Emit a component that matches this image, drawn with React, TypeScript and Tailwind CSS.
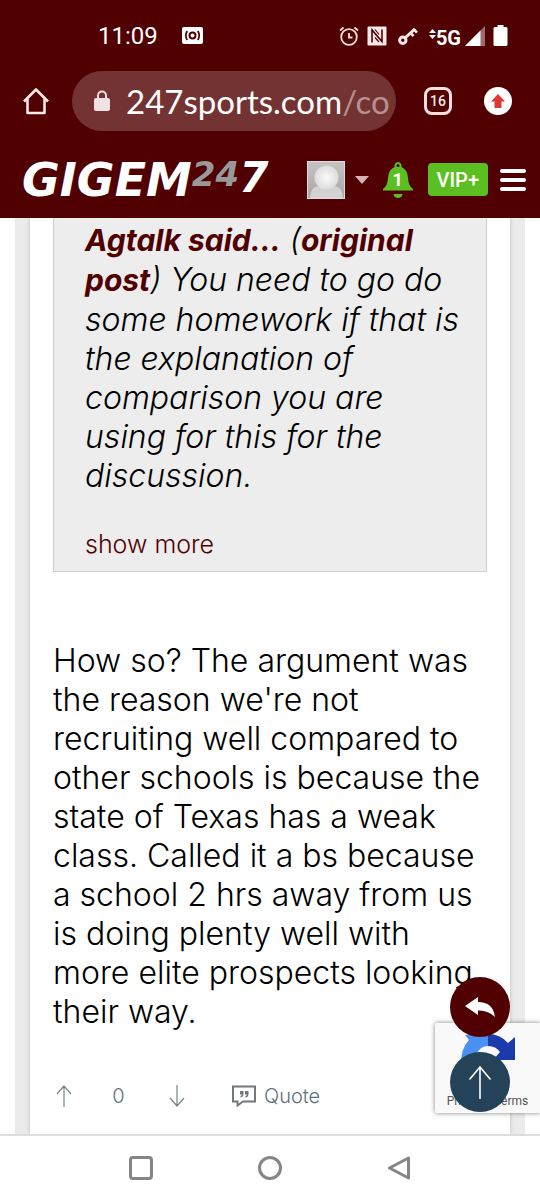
import type { ReactNode } from "react";

function StatusBar() {
  return (
    <div className="flex h-[71px] items-center justify-between pr-8 pl-[98px] text-white">
      <div className="flex items-center gap-6">
        <span className="text-[24px] leading-8">11:09</span>
        <svg className="h-[17px] w-[21px]" viewBox="0 0 21 17">
          <rect width="21" height="17" rx="2" fill="#fff" />
          <circle cx="10.500" cy="8.500" r="3" fill="none" stroke="#500000" strokeWidth="2" />
          <path d="M5.200 4Q2.400 8.500 5.200 13M15.800 4Q18.600 8.500 15.800 13" fill="none" stroke="#500000" strokeWidth="1.800" />
        </svg>
      </div>
      <div className="flex items-center">
        <svg className="mr-2 h-5 w-5" viewBox="0 0 20 20" fill="none" stroke="#f8dede" strokeWidth="1.800">
          <circle cx="10" cy="11" r="7.800" />
          <path d="M10 7v4.500h3.500M1 4.500L4.500 1.500M19 4.500L15.500 1.500" />
        </svg>
        <svg className="mr-[11px] h-5 w-5" viewBox="0 0 20 20">
          <rect x="0.500" y="0.500" width="19" height="19" rx="1" fill="#f8e8e8" />
          <path d="M5 16.500V4L15 15.500V3.500" fill="none" stroke="#500000" strokeWidth="1.600" />
          <path d="M8 3.500L12 8.500M8 11.500L12 16" fill="none" stroke="#500000" strokeWidth="1.200" />
        </svg>
        <svg className="mr-[11px] h-5 w-5" viewBox="0 0 20 20" fill="none" stroke="#f8e8e8">
          <circle cx="4.800" cy="14.200" r="3.200" strokeWidth="3" />
          <path d="M7.500 11.500L17 2.800" strokeWidth="3" />
          <path d="M12.500 7l3 3.200M16 3.500l3 3.200" strokeWidth="2.600" />
        </svg>
        <svg className="mb-1 h-[10px] w-[7px]" viewBox="0 0 7 10" fill="#fff">
          <path d="M0 4L3.500 0L7 4zM0 6L3.500 10L7 6z" />
        </svg>
        <span className="mt-1 text-[20px] leading-6 font-bold">5G</span>
        <svg className="ml-1 h-5 w-5" viewBox="0 0 20 20">
          <path d="M0 20L20 0V20z" fill="#9d6b6b" />
          <path d="M0 20L15.500 4.500V20z" fill="#fff" />
        </svg>
        <svg className="ml-2 h-[21px] w-[15px]" viewBox="0 0 15 21" fill="#fff">
          <path d="M4.500 0h6v2H13q1.500 0 1.500 1.500v16Q14.500 21 13 21H2Q.5 21 .5 19.500v-16Q.5 2 2 2h2.500z" />
        </svg>
      </div>
    </div>
  );
}

function AddressBar() {
  return (
    <div className="flex items-center pr-[28px] pl-[22px]">
      <a href="#home" aria-label="Home" className="mr-[22px]">
        <svg className="h-7 w-7" viewBox="0 0 28 28" fill="none" stroke="#f8e8e8" strokeWidth="2.600">
          <path d="M2 14.500L14 2.500L26 14.500M5.500 12v14h17V12" strokeLinejoin="round" />
        </svg>
      </a>
      <button className="flex h-[60px] min-w-0 flex-1 items-center rounded-full bg-[#733333] pr-1 pl-[22px] text-white">
        <svg className="mr-4 h-[22px] w-4 shrink-0" viewBox="0 0 16 22">
          <path d="M4 9V5.500a4 4 0 0 1 8 0V9" fill="none" stroke="#f0e2e2" strokeWidth="2" />
          <rect y="8" width="16" height="13" rx="2" fill="#f0e2e2" />
        </svg>
        <span className="overflow-hidden font-['Lato',sans-serif] text-[33px] leading-[44px] whitespace-nowrap">
          247sports.com<span className="text-[#b98f8f]">/co</span>
        </span>
      </button>
      <button
        aria-label="Tabs"
        className="ml-7 flex h-7 w-7 items-center justify-center rounded-lg border-[3px] border-[#f8dede] text-[14px] leading-4 font-medium text-[#f8e8e8]"
      >
        16
      </button>
      <button aria-label="Update" className="ml-8 flex h-7 w-7 items-center justify-center rounded-full bg-white">
        <svg className="h-[14px] w-[14px]" viewBox="0 0 14 14" fill="#dc3a30">
          <path d="M7 0L14 7.500H10.500V14H3.500V7.500H0z" />
        </svg>
      </button>
    </div>
  );
}

function SiteHeader() {
  return (
    <div className="flex h-[87px] items-center pt-[10px] pr-[14px] pl-[22px]">
      <a href="#top" className="flex items-start font-['DejaVu_Sans',sans-serif] font-bold text-white italic">
        <span className="text-[46px] leading-[44px]">GIGEM</span>
        <span className="text-[34px] leading-8 text-[#999]">24</span>
        <span className="text-[42px] leading-10">7</span>
      </a>
      <button aria-label="Account" className="ml-auto flex items-center gap-[10px]">
        <svg className="h-[38px] w-[38px]" viewBox="0 0 38 38">
          <defs>
            <radialGradient id="head">
              <stop offset="0" stopColor="#fafafa" />
              <stop offset="1" stopColor="#dcdcdc" />
            </radialGradient>
            <linearGradient id="back" x2="0" y2="1">
              <stop offset="0" stopColor="#c4c4c4" />
              <stop offset="1" stopColor="#a6a6a6" />
            </linearGradient>
          </defs>
          <rect width="38" height="38" fill="url(#back)" />
          <path d="M3 38Q3 25 13 25H26Q36 25 36 38z" fill="#d2d2d2" />
          <circle cx="19.500" cy="16.500" r="12" fill="url(#head)" />
          <rect x="0.500" y="0.500" width="37" height="37" fill="none" stroke="#ddd" />
        </svg>
        <svg className="h-2 w-[14px]" viewBox="0 0 14 8" fill="#d3b5b5">
          <path d="M0 0h14L7 8z" />
        </svg>
      </button>
      <button aria-label="Notifications" className="relative ml-[14px] text-white">
        <svg className="h-9 w-[30px]" viewBox="0 0 30 36" fill="#5bbf21">
          <path d="M15 0a4 4 0 0 1 3.500 5Q24.500 7.500 25 16Q25.500 24 30 27V28.500H0V27Q4.500 24 5 16Q5.500 7.500 11.500 5A4 4 0 0 1 15 0z" />
          <path d="M10.500 32h9Q19 36 15 36T10.500 32z" />
          <circle cx="15" cy="3.500" r="1.500" fill="#500000" />
        </svg>
        <span className="absolute inset-x-0 top-2 text-center text-[18px] leading-5 font-bold">1</span>
      </button>
      <a href="#vip" className="ml-[15px] flex h-[33px] items-center rounded bg-[#5bbf21] px-[9px] text-[20px] leading-6 font-medium text-white">
        VIP+
      </a>
      <button aria-label="Menu" className="ml-3 flex w-[26px] flex-col gap-[5px]">
        <span className="h-1 w-full rounded-xs bg-white" />
        <span className="h-1 w-full rounded-xs bg-white" />
        <span className="h-1 w-full rounded-xs bg-white" />
      </button>
    </div>
  );
}

function QuotedPost() {
  return (
    <blockquote className="border border-t-0 border-[#d0d0d0] bg-[#ededed] pt-[2px] pr-4 pb-[7px] pl-[31px]">
      <p className="text-[32px] leading-[39px] font-light whitespace-nowrap italic">
        <a href="#agtalk" className="text-[30px] font-bold text-[#500000]">Agtalk said...</a> (
        <a href="#original" className="text-[30px] font-bold text-[#500000]">original<br />post</a>) You need to go do
        <br />some homework if that is
        <br />the explanation of
        <br />comparison you are
        <br />using for this for the
        <br />discussion.
      </p>
      <button className="mt-[30px] block text-[25px] leading-[39px] font-light text-[#500000]">show more</button>
    </blockquote>
  );
}

function VoteArrow({ label, children }: { label: string; children: ReactNode }) {
  return (
    <button aria-label={label}>
      <svg className="h-[22px] w-4" viewBox="0 0 16 22" fill="none" stroke="#7a8288" strokeWidth="1.200">
        {children}
      </svg>
    </button>
  );
}

function PostActions() {
  return (
    <div className="flex items-center pl-[3px] text-[20px] leading-6 font-light text-[#5f707d]">
      <VoteArrow label="Upvote">
        <path d="M8 22V1M1 9L8 1L15 9" />
      </VoteArrow>
      <span className="w-[97px] pr-1 text-center">0</span>
      <VoteArrow label="Downvote">
        <path d="M8 0V21M1 13L8 21L15 13" />
      </VoteArrow>
      <button className="ml-[47px] flex items-center gap-2">
        <svg className="h-[22px] w-6" viewBox="0 0 24 22" fill="none" stroke="#71777c" strokeWidth="2">
          <path d="M1 1.500H23V16.500H11L5.500 20.500V16.500H1z" />
          <path d="M8 6h3.500v3Q11.500 12 8.500 12.500V11Q9.700 10.500 9.700 9.500H8zM13 6h3.500v3Q16.500 12 13.500 12.500V11Q14.700 10.500 14.700 9.500H13z" fill="#71777c" stroke="none" />
        </svg>
        Quote
      </button>
    </div>
  );
}

function FloatingControls() {
  return (
    <>
      <div className="absolute right-0 bottom-[87px] flex h-[90px] w-[105px] flex-col items-center justify-end rounded-l-xs bg-[#f9f9f9] pb-[5px] shadow-[0_0_5px_#808080]">
        <svg className="absolute top-1 left-[25px] h-[60px] w-[56px]" viewBox="0 0 56 60">
          <path d="M28 7V19Q20 19 17 27L12 40H1Q0 22 9 13L5 8Q14 7 28 7z" fill="#4a90f2" />
          <path d="M28 7Q40 7 48 16L55 10V33H33L40 25Q36 19 28 19z" fill="#1c3aa9" />
        </svg>
        <span className="font-['Roboto',sans-serif] text-[12px] leading-[14px] whitespace-nowrap text-[#555]">Privacy - Terms</span>
      </div>
      <div className="absolute right-[30px] bottom-[88px] flex flex-col gap-[15px]">
        <button aria-label="Reply" className="flex h-[60px] w-[60px] items-center justify-center rounded-full bg-[#500000]">
          <svg className="h-5 w-[30px]" viewBox="0 0 30 20" fill="#fff">
            <path d="M0 9L13 0V5Q28 5 30 20Q23 13 13 13.500V18z" />
          </svg>
        </button>
        <button aria-label="Back to top" className="flex h-[60px] w-[60px] items-center justify-center rounded-full bg-[#254358]">
          <svg className="h-[34px] w-6" viewBox="0 0 24 34" fill="none" stroke="#fff" strokeWidth="1.600">
            <path d="M12 34V2M1.500 14.500L12 2L22.500 14.500" />
          </svg>
        </button>
      </div>
    </>
  );
}

function SystemNav() {
  return (
    <nav className="flex h-[66px] items-center justify-center gap-[105px] border-t-2 border-[#ddd] bg-white">
      <button aria-label="Recent apps" className="h-6 w-6 rounded border-[3px] border-[#858585]" />
      <button aria-label="Home screen" className="h-6 w-6 rounded-full border-[3px] border-[#858585]" />
      <button aria-label="Back">
        <svg className="h-6 w-6" viewBox="0 0 24 24" fill="none" stroke="#858585" strokeWidth="3" strokeLinejoin="round">
          <path d="M2.500 12L21.500 2V22z" />
        </svg>
      </button>
    </nav>
  );
}

export default function App() {
  return (
    <div className="relative flex min-h-screen flex-col bg-white font-['Inter',sans-serif] text-black">
      <header className="bg-[#500000] font-['Roboto',sans-serif]">
        <StatusBar />
        <AddressBar />
        <SiteHeader />
      </header>
      <main className="mx-[15px] flex flex-1 flex-col bg-[#ebebeb] px-[15px]">
        <article className="flex-1 bg-white px-[23px] shadow-[0_0_4px_#bbb] [clip-path:inset(0_-8px)]">
          <QuotedPost />
          <p className="mt-[69px] mb-[53px] text-[32px] leading-[39px] font-light whitespace-nowrap">
            How so? The argument was
            <br />the reason we're not
            <br />recruiting well compared to
            <br />other schools is because the
            <br />state of Texas has a weak
            <br />class. Called it a bs because
            <br />a school 2 hrs away from us
            <br />is doing plenty well with
            <br />more elite prospects looking
            <br />their way.
          </p>
          <PostActions />
        </article>
      </main>
      <FloatingControls />
      <SystemNav />
    </div>
  );
}
